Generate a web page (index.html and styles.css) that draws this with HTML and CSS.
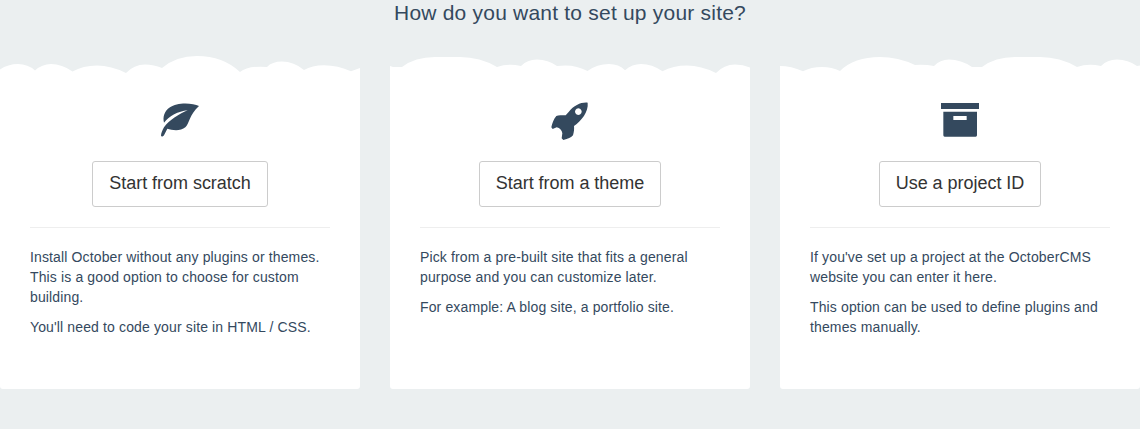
FILE: index.html
```html
<!DOCTYPE html>
<html lang="en">
<head>
<meta charset="utf-8">
<title>Set up your site</title>
<link rel="stylesheet" href="styles.css">
</head>
<body>
<h1 class="title">How do you want to set up your site?</h1>
<main class="options">
  <section class="option">
    <svg class="clouds" viewBox="0 50 360 26"><path d="M0 69.5Q8 64 18 64Q28 64 35 70.5Q42 64 51 64Q62 64 72.5 71.5Q83 65.5 97 65.5Q111 65.5 126 73Q134 64.5 145 64.5Q154 64.5 162 68Q176 56 197 56Q223 56 240 72Q248 65.5 267 67Q272 61.5 282 61.5Q294 61.5 304 70Q312 65.3 324 65.3Q338 65.3 351 71.3L360 68V76H0Z"/></svg>
    <div class="content">
      <svg class="icon" viewBox="0 0 180 180"><path d="M147 48C128 38 80 36 60 52C42 64 38 82 42 98C58 78 84 64 113 61C86 73 58 90 42 112C37 121 33 130 33 137C36 141 40 140 42 136L52 116C66 121 92 124 106 112C118 101 118 74 147 48Z"/></svg>
      <button class="choose">Start from scratch</button>
      <div class="description">
        <p>Install October without any plugins or themes.<br>This is a good option to choose for custom<br>building.</p>
        <p>You'll need to code your site in HTML / CSS.</p>
      </div>
    </div>
  </section>
  <section class="option">
    <svg class="clouds" viewBox="0 50 360 26"><path d="M0 66L3 67H12Q25 57 45 57H70Q90 57 107 67Q118 63 131 66Q137 59.5 147 59.5Q158 59.5 167 66Q184 63.5 197.5 71Q207 64 219 64Q229 64 235 70.3Q242 64 251 64Q262 64 272.5 71.3Q283 65.5 297 65.5Q311 65.5 326 73Q334 64.5 345 64.5Q353 64.5 360 67.5V76H0Z"/></svg>
    <div class="content">
      <svg class="icon" viewBox="0 0 180 180"><path fill-rule="evenodd" d="M143 38C124 36 102 46 86 66L77 76C66 76 55 76 49 78C41 86 36 102 34 112L38 117L50 112C60 114 66 122 67 130L65 145L70 150C84 147 94 142 99 136C102 126 103 116 102 108C124 92 146 66 143 38ZM115 55a10 10 0 1 0 .1 0Z"/></svg>
      <button class="choose">Start from a theme</button>
      <div class="description">
        <p>Pick from a pre-built site that fits a general<br>purpose and you can customize later.</p>
        <p>For example: A blog site, a portfolio site.</p>
      </div>
    </div>
  </section>
  <section class="option">
    <svg class="clouds" viewBox="0 50 360 26"><path d="M0 66Q11 66 23 71.3Q31 67 42 67Q52 67 60 71Q74 57 100 57Q118 57 135 65Q145 64.3 154 66Q160 59.5 169 59.5Q181 59.5 192 67H202Q215 57 235 57H260Q280 57 297 67Q308 63 321 66Q327 59.5 337 59.5Q348 59.5 357 66L360 65.5V76H0Z"/></svg>
    <div class="content">
      <svg class="icon" viewBox="0 0 180 180"><path fill-rule="evenodd" d="M33 39H147V57H33ZM40 65H141V136Q141 140 137 140H44Q40 140 40 136ZM70 78V90H110V78Z"/></svg>
      <button class="choose">Use a project ID</button>
      <div class="description">
        <p>If you've set up a project at the OctoberCMS<br>website you can enter it here.</p>
        <p>This option can be used to define plugins and<br>themes manually.</p>
      </div>
    </div>
  </section>
</main>
</body>
</html>
```
FILE: styles.css
```css
body {
  margin: 0;
  height: 429px;
  overflow: hidden;
  background: #ebeff0;
  color: #34495e;
  font: 14px/20px "Nimbus Sans", "Liberation Sans", sans-serif;
}
.title {
  margin: 0;
  height: 50px;
  text-align: center;
  font-size: 21px;
  line-height: 26px;
  font-weight: 400;
  letter-spacing: 0.21px;
}
.options {
  display: grid;
  grid-template-columns: repeat(3, 360px);
  gap: 30px;
}
.option {
  display: flex;
  flex-direction: column;
  height: 339px;
}
.clouds {
  display: block;
  width: 360px;
  height: 26px;
  fill: #fff;
}
.content {
  flex: 1;
  display: flex;
  flex-direction: column;
  align-items: center;
  padding: 14px 30px 0;
  background: #fff;
  border-radius: 0 0 3px 3px;
}
.icon {
  width: 60px;
  height: 60px;
  fill: #34495e;
}
.choose {
  box-sizing: border-box;
  height: 46px;
  margin: 11px 0 20px;
  padding: 0 16px 3px;
  border: 1px solid #ccc;
  border-radius: 3px;
  background: #fff;
  color: #333;
  font: 18px/24px "Nimbus Sans", "Liberation Sans", sans-serif;
  letter-spacing: -0.03px;
}
.description {
  align-self: stretch;
  border-top: 1px solid #eee;
  padding-top: 19px;
  white-space: nowrap;
}
.description p {
  margin: 0 0 10px;
  letter-spacing: 0.135px;
}
```
